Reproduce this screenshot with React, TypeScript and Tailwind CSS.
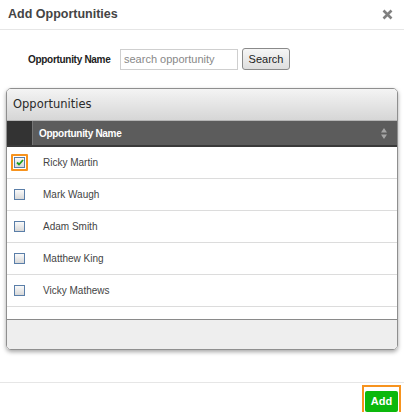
import React from 'react';

const rows = [
  { name: 'Ricky Martin', checked: true },
  { name: 'Mark Waugh', checked: false },
  { name: 'Adam Smith', checked: false },
  { name: 'Matthew King', checked: false },
  { name: 'Vicky Mathews', checked: false },
];

function Checkbox({ checked }: { checked: boolean }) {
  return (
    <span className="flex h-[11px] w-[11px] items-center justify-center border border-[#5a7ea8] bg-gradient-to-b from-[#fafafa] to-[#d8d8d8]">
      {checked && (
        <svg width="8" height="7" viewBox="0 0 8 7">
          <path d="M1 3.5 L3 5.5 L7 1" fill="none" stroke="#1e9e1e" strokeWidth="1.8" />
        </svg>
      )}
    </span>
  );
}

export default function App() {
  return (
    <div className="relative h-[412px] w-[404px] overflow-hidden bg-white font-['Liberation_Sans',Arial,sans-serif] text-[#333]">
      {/* Title bar */}
      <div className="flex h-[30px] items-center justify-between border-b border-[#e6e6e6] pl-[8px] pr-[11px]">
        <h1 className="text-[12.5px] font-bold text-[#444]">Add Opportunities</h1>
        <svg width="11" height="11" viewBox="0 0 11 11">
          <path d="M1.5 1.5 L9.5 9.5 M9.5 1.5 L1.5 9.5" stroke="#808080" strokeWidth="2.6" />
        </svg>
      </div>

      {/* Search */}
      <div className="mt-[18px] flex h-[22px] items-center pl-[28px]">
        <span className="w-[92px] text-[10px] font-bold tracking-[-0.3px] text-[#222]">Opportunity Name</span>
        <input
          className="h-[21px] w-[118px] border border-[#cfcfcf] px-[3px] text-[11px] text-[#777] outline-none placeholder:text-[#888]"
          placeholder="search opportunity"
        />
        <button className="ml-[4px] h-[22px] w-[48px] rounded-[3px] border border-[#8a8a8a] bg-gradient-to-b from-[#f6f6f6] to-[#dedede] text-[11px] text-[#222]">
          Search
        </button>
      </div>

      {/* Grid panel */}
      <div className="mx-[6px] mt-[18px] overflow-hidden rounded-[5px] border border-[#8f8f8f] shadow-[0_2px_4px_rgba(0,0,0,0.35)]">
        <div className="flex h-[32px] items-center border-b border-[#b5b5b5] bg-gradient-to-b from-[#f4f4f4] to-[#d6d6d6] pl-[6px]">
          <span className="font-['DejaVu_Sans',sans-serif] text-[11.5px] font-normal text-[#2a2a2a]">Opportunities</span>
        </div>
        <div className="flex h-[26px] border-b-2 border-[#3a3a3a]">
          <div className="w-[25px] bg-[#333]" />
          <div className="flex flex-1 items-center justify-between border-l border-[#777] bg-[#5c5c5c] pl-[6px] pr-[10px]">
            <span className="text-[10px] font-bold tracking-[-0.3px] text-white">Opportunity Name</span>
            <svg width="6" height="11" viewBox="0 0 6 11">
              <path d="M3 0 L6 4.5 L0 4.5 Z M0 6.5 L6 6.5 L3 11 Z" fill="#a5a5a5" />
            </svg>
          </div>
        </div>
        <div className="bg-white">
          {rows.map((r) => (
            <div key={r.name} className="flex h-[32px] items-center border-b border-[#dcdcdc]">
              <div className="flex w-[36px] pl-[4px]">
                <span className={r.checked ? 'rounded-[1px] border-2 border-[#f7931e] p-[1px]' : 'p-[3px]'}>
                  <Checkbox checked={r.checked} />
                </span>
              </div>
              <span className="text-[10px] text-[#444]">{r.name}</span>
            </div>
          ))}
          <div className="h-[12px]" />
        </div>
        <div className="h-[30px] border-t border-[#8a8a8a] bg-[#eeeeee]" />
      </div>

      {/* Footer */}
      <div className="absolute bottom-0 left-0 right-0 flex h-[30px] items-start justify-end border-t border-[#e6e6e6] pr-[3px] pt-[2px]">
        <div className="border-2 border-[#f7931e] p-[1px]">
          <button className="h-[21px] w-[33px] rounded-[2px] bg-[#0cb80c] text-[11px] font-bold text-white">Add</button>
        </div>
      </div>
    </div>
  );
}
